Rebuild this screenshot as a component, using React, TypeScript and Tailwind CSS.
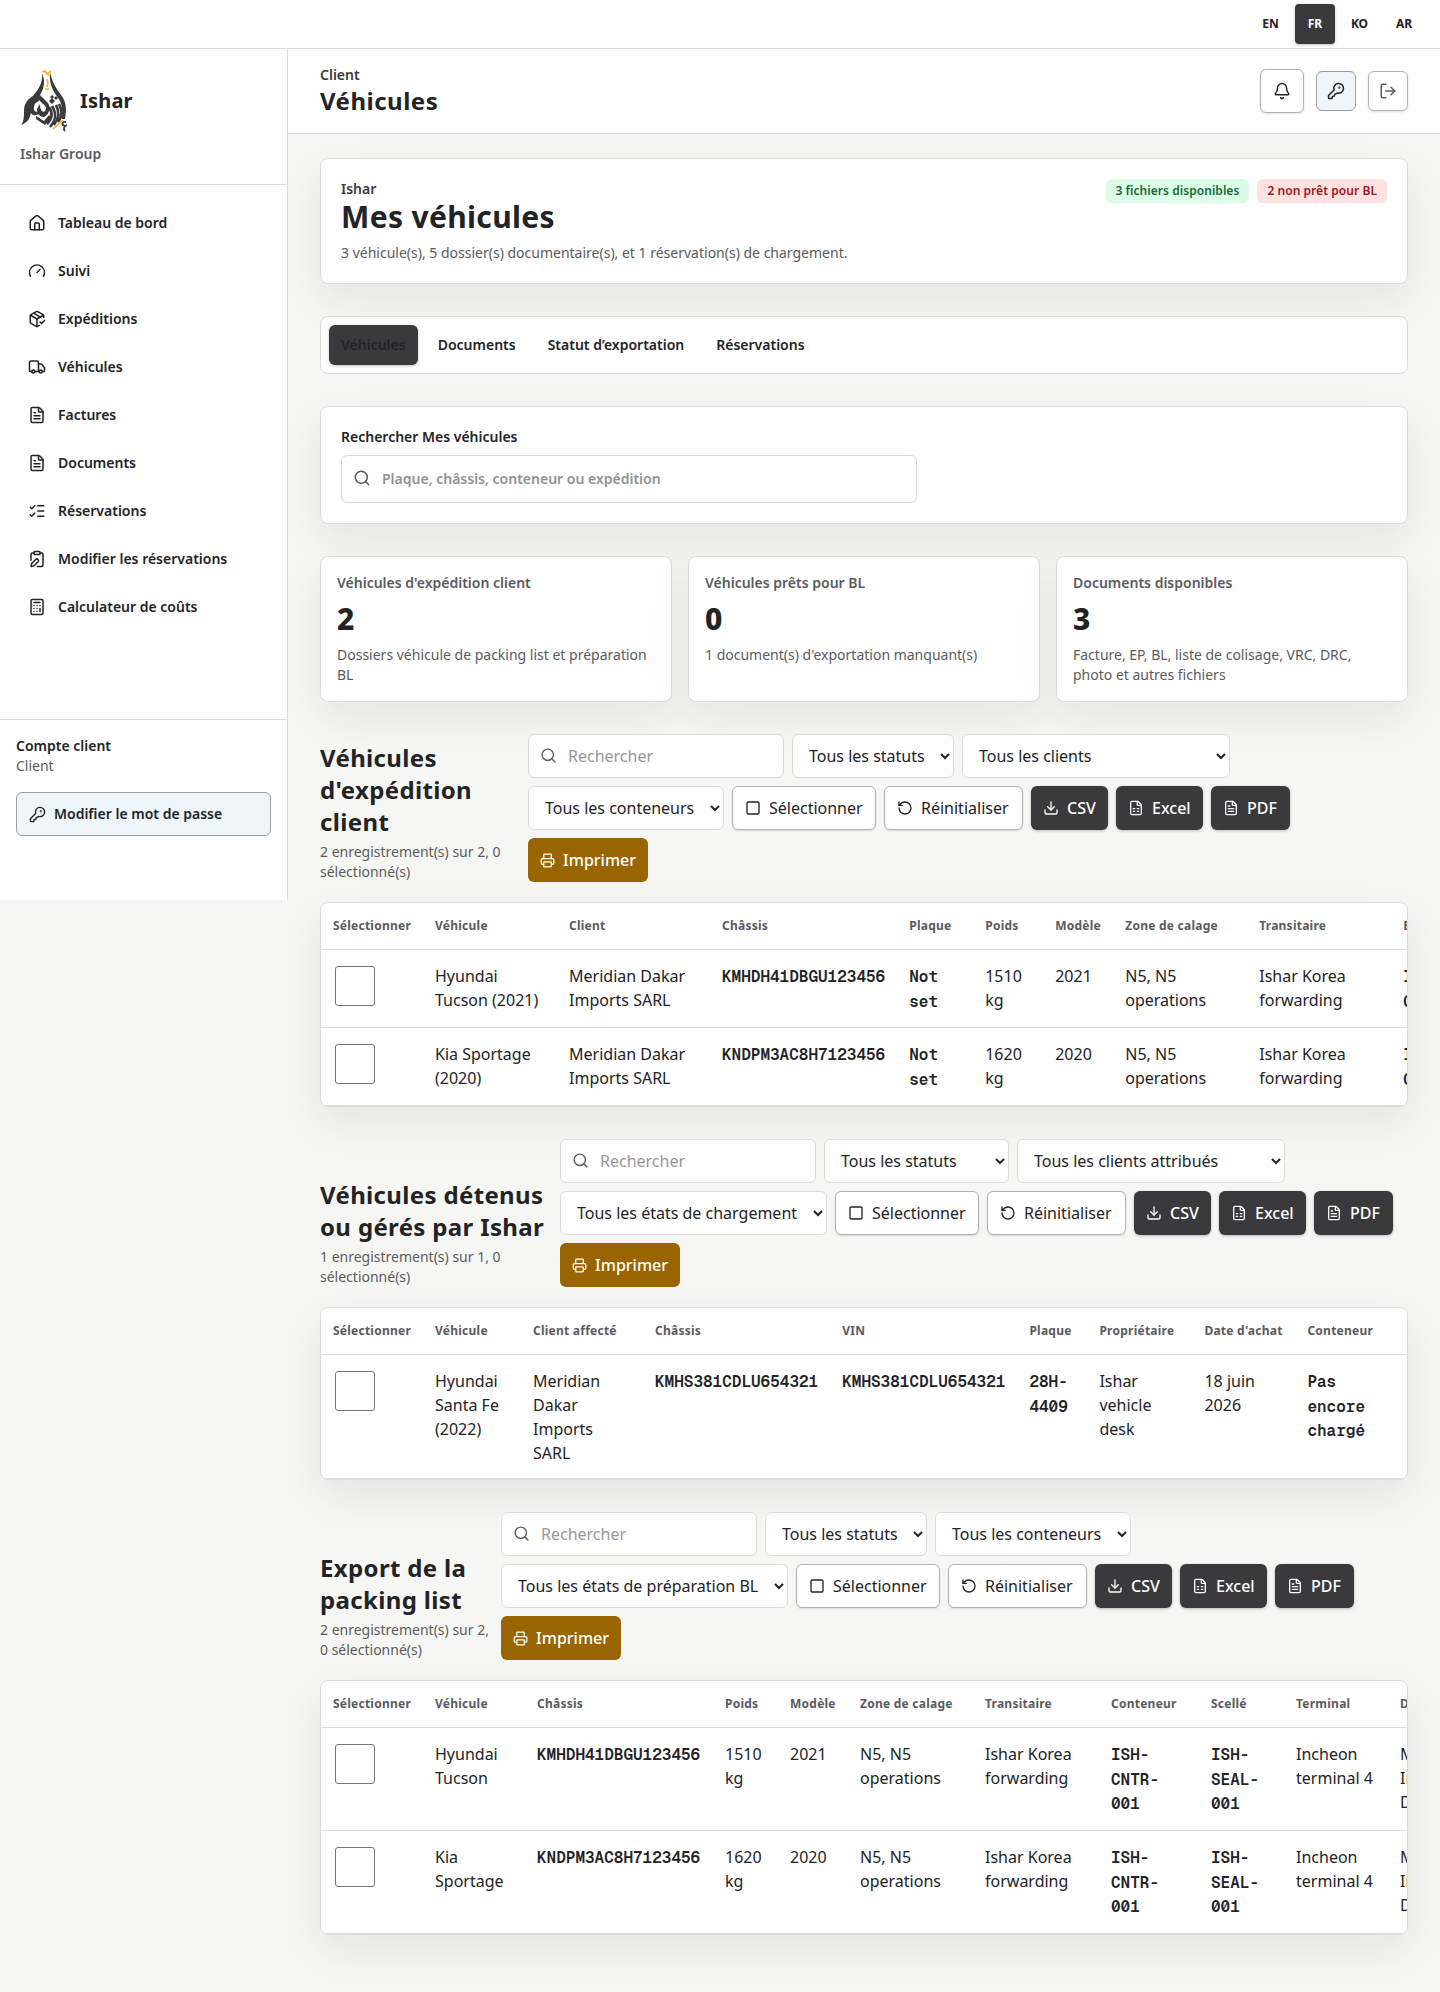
import {
  Bell,
  Calculator,
  ClipboardPen,
  Download,
  FileSpreadsheet,
  FileText,
  Gauge,
  House,
  KeyRound,
  ListChecks,
  LogOut,
  PackageCheck,
  Printer,
  RotateCcw,
  Search,
  Square,
  Truck,
  type LucideIcon,
} from "lucide-react";
import clsx from "clsx";

const navItems: { label: string; icon: LucideIcon }[] = [
  { label: "Tableau de bord", icon: House },
  { label: "Suivi", icon: Gauge },
  { label: "Expéditions", icon: PackageCheck },
  { label: "Véhicules", icon: Truck },
  { label: "Factures", icon: FileText },
  { label: "Documents", icon: FileText },
  { label: "Réservations", icon: ListChecks },
  { label: "Modifier les réservations", icon: ClipboardPen },
  { label: "Calculateur de coûts", icon: Calculator },
];

const stats = [
  { label: "Véhicules d'expédition client", value: "2", note: "Dossiers véhicule de packing list et préparation BL" },
  { label: "Véhicules prêts pour BL", value: "0", note: "1 document(s) d'exportation manquant(s)" },
  { label: "Documents disponibles", value: "3", note: "Facture, EP, BL, liste de colisage, VRC, DRC, photo et autres fichiers" },
];

type Column = { label: string; width: string; mono?: boolean };

const shipmentColumns: Column[] = [
  { label: "Véhicule", width: "w-[134px]" },
  { label: "Client", width: "w-[153px]" },
  { label: "Châssis", width: "w-[187px]", mono: true },
  { label: "Plaque", width: "w-[76px]", mono: true },
  { label: "Poids", width: "w-[70px]" },
  { label: "Modèle", width: "w-[70px]" },
  { label: "Zone de calage", width: "w-[134px]" },
  { label: "Transitaire", width: "w-[144px]" },
  { label: "Empotage", width: "w-[140px]", mono: true },
];

const shipmentRows = [
  ["Hyundai\nTucson (2021)", "Meridian Dakar\nImports SARL", "KMHDH41DBGU123456", "Not\nset", "1510\nkg", "2021", "N5, N5\noperations", "Ishar Korea\nforwarding", "ISH-\nCNTR"],
  ["Kia Sportage\n(2020)", "Meridian Dakar\nImports SARL", "KNDPM3AC8H7123456", "Not\nset", "1620\nkg", "2020", "N5, N5\noperations", "Ishar Korea\nforwarding", "ISH-\nCNTR"],
];

const ownedColumns: Column[] = [
  { label: "Véhicule", width: "w-[98px]" },
  { label: "Client affecté", width: "w-[122px]" },
  { label: "Châssis", width: "w-[187px]", mono: true },
  { label: "VIN", width: "w-[187px]", mono: true },
  { label: "Plaque", width: "w-[70px]", mono: true },
  { label: "Propriétaire", width: "w-[105px]" },
  { label: "Date d'achat", width: "w-[103px]" },
  { label: "Conteneur", width: "w-[114px]", mono: true },
];

const ownedRows = [
  ["Hyundai\nSanta Fe\n(2022)", "Meridian\nDakar\nImports\nSARL", "KMHS381CDLU654321", "KMHS381CDLU654321", "28H-\n4409", "Ishar\nvehicle\ndesk", "18 juin\n2026", "Pas\nencore\nchargé"],
];

const packingColumns: Column[] = [
  { label: "Véhicule", width: "w-[102px]" },
  { label: "Châssis", width: "w-[188px]", mono: true },
  { label: "Poids", width: "w-[65px]" },
  { label: "Modèle", width: "w-[70px]" },
  { label: "Zone de calage", width: "w-[125px]" },
  { label: "Transitaire", width: "w-[126px]" },
  { label: "Conteneur", width: "w-[100px]", mono: true },
  { label: "Scellé", width: "w-[85px]", mono: true },
  { label: "Terminal", width: "w-[104px]" },
  { label: "Destinataire", width: "w-[120px]" },
];

const packingRows = [
  ["Hyundai\nTucson", "KMHDH41DBGU123456", "1510\nkg", "2021", "N5, N5\noperations", "Ishar Korea\nforwarding", "ISH-\nCNTR-\n001", "ISH-\nSEAL-\n001", "Incheon\nterminal 4", "Meridian\nImports\nDakar"],
  ["Kia\nSportage", "KNDPM3AC8H7123456", "1620\nkg", "2020", "N5, N5\noperations", "Ishar Korea\nforwarding", "ISH-\nCNTR-\n001", "ISH-\nSEAL-\n001", "Incheon\nterminal 4", "Meridian\nImports\nDakar"],
];

const cardClass = "rounded-lg border border-[#dcdcd9] bg-[#fefefe]";
const shadowClass = "shadow-[0_16px_40px_rgba(35,35,38,0.08)]";
const darkButton = "flex h-11 items-center gap-2 rounded-md bg-[#3a3a3c] px-3 font-medium text-white shadow-[0_1px_3px_rgba(0,0,0,0.25)]";
const lightButton = "flex h-11 items-center gap-2 rounded-md border border-[#b3b3b5] bg-white px-3 shadow-[0_1px_2px_rgba(0,0,0,0.12)]";

function Logo() {
  return (
    <svg width="48" height="64" viewBox="0 0 48 64" fill="none">
      <g fill="#3a3a3c">
        <path d="M22 4 C23 13 19 20 13 27 C6 31 4 36 4 43 C4 50 3 54 1 56 C7 54 10 50 11 43 C11 37 16 32 20 26 C25 18 25 11 22 4Z" />
        <path d="M30 3 C29 13 32 20 36 26 C42 33 43 40 42 50 L45 50 C47 40 46 32 41 26 C35 18 32 12 30 3Z" />
        <path d="M14 29 C9 35 8 43 13 46 C18 47 20 44 20 41 C17 44 13 43 14 38 C14 35 16 33 19 32 L18 28Z" />
        <path d="M18 24 L28 34 C31 39 29 46 24 48 C20 48 17 45 17 40 L20 35 C20 42 23 44 25 42 C27 40 26 37 23 35 L17 29Z" />
        <path d="M16 47 L24 52 L29 46 L31 49 L25 56 L16 50Z" />
        <path d="M29 32l3-3 3 3-3 3zM34 29l2-2 2 2-2 2zM30 28l2-2 2 2-2 2z" />
      </g>
      <g stroke="#3a3a3c" strokeWidth="2.6">
        <path d="M29 38 C33 44 32 50 27 55 M32 37 C37 45 36 51 30 58" />
        <path d="M36 36 C40 43 39 49 34 56 M39 35 C42 41 43 46 38 53" />
      </g>
      <path d="M46 53c-4-1-5 3-1 4l2-1c-3 1-4 4-2 6" stroke="#3a3a3c" strokeWidth="1.8" />
      <path d="M22 3 L25 2 L27 5 L31 2 M26 5 L29 6 M27 10 L28 14 L27 18 M25 20 h4 M33 60 L43 51" stroke="#f3b229" strokeWidth="1.6" />
    </svg>
  );
}

type SectionProps = {
  title: string;
  summary: string;
  titleWidth: string;
  filters: { label: string; width: string }[];
  columns: Column[];
  rows: string[][];
  rowHeight: string;
};

function VehicleSection({ title, summary, titleWidth, filters, columns, rows, rowHeight }: SectionProps) {
  return (
    <section className="mt-8">
      <div className="flex items-end gap-4">
        <div className={clsx("shrink-0", titleWidth)}>
          <h2 className="text-2xl leading-8 font-bold tracking-[0.35px] whitespace-pre">{title}</h2>
          <p className="mt-1 text-sm whitespace-pre text-[#5b5b5e]">{summary}</p>
        </div>
        <div className="flex flex-1 flex-wrap gap-2">
          <div className="flex h-11 w-64 items-center gap-[11px] rounded-md border border-[#dcdcd9] bg-[#fefefe] pl-[11px] text-[#98989b]">
            <Search size={17} className="-mt-0.5 text-[#5b5b5e]" />
            Rechercher
          </div>
          {filters.map((filter) => (
            <select
              key={filter.label}
              className={clsx("h-11 rounded-md border border-[#dcdcd9] bg-[#fefefe] px-3", filter.width)}
            >
              <option>{filter.label}</option>
            </select>
          ))}
          <button className={clsx(lightButton, "w-36")}>
            <Square size={16} />
            Sélectionner
          </button>
          <button className={clsx(lightButton, "w-[139px]")}>
            <RotateCcw size={16} />
            Réinitialiser
          </button>
          <button className={clsx(darkButton, "w-[77px]")}>
            <Download size={16} />
            CSV
          </button>
          <button className={clsx(darkButton, "w-[87px]")}>
            <FileSpreadsheet size={16} />
            Excel
          </button>
          <button className={clsx(darkButton, "w-[79px]")}>
            <FileText size={16} />
            PDF
          </button>
          <button className="flex h-11 w-[120px] items-center gap-2 rounded-md bg-[#9a6500] px-3 font-medium text-white">
            <Printer size={17} />
            Imprimer
          </button>
        </div>
      </div>

      <div className={clsx("mt-5 overflow-hidden", cardClass, shadowClass)}>
        <table className="w-max table-fixed border-separate border-spacing-0 text-left">
          <thead>
            <tr className="text-xs leading-[18px] font-bold tracking-[0.24px] text-[#5b5b5e]">
              <th className="w-[102px] border-b border-[#dcdcd9] px-3 py-3.5">Sélectionner</th>
              {columns.map((column) => (
                <th key={column.label} className={clsx("border-b border-[#dcdcd9] px-3 py-3.5 whitespace-nowrap", column.width)}>
                  {column.label}
                </th>
              ))}
            </tr>
          </thead>
          <tbody>
            {rows.map((row) => (
              <tr key={row[0]} className={clsx("align-top", rowHeight)}>
                <td className="border-b border-[#dcdcd9] px-3 pt-3.5">
                  <span className="mt-0.5 ml-0.5 block size-10 rounded-[3px] border border-[#767676] bg-white" />
                </td>
                {row.map((cell, index) => (
                  <td
                    key={index}
                    className={clsx(
                      "border-b border-[#dcdcd9] px-3 pb-3 whitespace-pre",
                      columns[index].mono
                        ? "pt-[15px] font-['Geist_Mono','JetBrains_Mono','Noto_Sans_Mono','Liberation_Mono',monospace] leading-[24.67px] font-semibold"
                        : "pt-3.5"
                    )}
                  >
                    {cell}
                  </td>
                ))}
              </tr>
            ))}
          </tbody>
        </table>
      </div>
    </section>
  );
}

export default function App() {
  return (
    <div className="h-[1992px] overflow-hidden bg-[#f6f6f4] font-['Noto_Sans',sans-serif] text-base text-[#232326]">
      {/* Language bar */}
      <div className="flex h-[49px] items-center justify-end gap-[4.5px] border-b border-[#dcdcd9] bg-[#fefefe] pr-4 text-xs font-bold">
        {["EN", "FR", "KO", "AR"].map((lang) => (
          <button
            key={lang}
            className={clsx(
              "h-10 min-w-10 rounded",
              lang === "FR" && "bg-[#3a3a3c] text-white shadow-[0_1px_3px_rgba(0,0,0,0.25)]"
            )}
          >
            {lang}
          </button>
        ))}
      </div>

      <div className="flex items-start">
        {/* Sidebar */}
        <aside className="flex h-[851px] w-72 shrink-0 flex-col border-r border-[#dcdcd9] bg-[#fefefe]">
          <div className="h-[136px] border-b border-[#dcdcd9] px-5 pt-5">
            <div className="flex items-center gap-3">
              <Logo />
              <span className="text-xl font-bold tracking-[0.2px]">Ishar</span>
            </div>
            <p className="mt-[11px] text-sm font-semibold text-[#5b5b5e]">Ishar Group</p>
          </div>
          <nav className="flex flex-1 flex-col gap-1 p-4">
            {navItems.map((item) => (
              <a key={item.label} className="flex h-11 items-center gap-3 px-3 text-sm font-semibold">
                <item.icon size={18} />
                {item.label}
              </a>
            ))}
          </nav>
          <div className="h-[181px] border-t border-[#dcdcd9] p-4 text-sm">
            <p className="font-semibold">Compte client</p>
            <p className="text-[#5b5b5e]">Client</p>
            <button className="mt-4 flex h-11 w-full items-center gap-2 rounded-md border border-[#9b9fa5] bg-[#eef5fb] px-3 font-semibold">
              <KeyRound size={17} />
              Modifier le mot de passe
            </button>
          </div>
        </aside>

        <div className="min-w-0 flex-1">
          <header className="flex h-[85px] items-center justify-between border-b border-[#dcdcd9] bg-[#fefefe] px-8">
            <div>
              <p className="text-sm font-semibold text-[#3a3a3c]">Client</p>
              <h1 className="text-2xl font-bold tracking-[0.5px]">Véhicules</h1>
            </div>
            <div className="flex items-center gap-3">
              <button className="flex size-11 items-center justify-center rounded-md border border-[#b3b3b5] bg-white shadow-[0_1px_2px_rgba(0,0,0,0.12)]">
                <Bell size={18} />
              </button>
              <button className="flex size-10 items-center justify-center rounded-md border border-[#9b9fa5] bg-[#eef5fb]">
                <KeyRound size={18} />
              </button>
              <button className="flex size-10 items-center justify-center rounded-md border border-[#b3b3b5] bg-white text-[#5b5b5e] shadow-[0_1px_2px_rgba(0,0,0,0.12)]">
                <LogOut size={18} />
              </button>
            </div>
          </header>

          <main className="px-8 pt-6">
            <section className={clsx("flex items-start justify-between p-5", cardClass, shadowClass)}>
              <div>
                <p className="text-sm font-semibold text-[#3a3a3c]">Ishar</p>
                <h2 className="text-3xl font-bold tracking-[0.35px]">Mes véhicules</h2>
                <p className="mt-2 text-sm text-[#5b5b5e]">3 véhicule(s), 5 dossier(s) documentaire(s), et 1 réservation(s) de chargement.</p>
              </div>
              <div className="flex gap-2 text-xs leading-6 font-semibold tracking-[0.05px]">
                <span className="rounded-md bg-[#dcfce7] px-2.5 text-[#166b3a]">3 fichiers disponibles</span>
                <span className="rounded-md bg-[#fee2e2] px-2.5 text-[#a3121f]">2 non prêt pour BL</span>
              </div>
            </section>

            {/* Tabs */}
            <div className={clsx("mt-8 flex gap-2 p-2 text-sm font-semibold", cardClass)}>
              {["Véhicules", "Documents", "Statut d’exportation", "Réservations"].map((tab, index) => (
                <button
                  key={tab}
                  className={clsx("h-10 rounded-md px-3", index === 0 && "bg-[#3a3a3c] shadow-[0_1px_3px_rgba(0,0,0,0.25)]")}
                >
                  {tab}
                </button>
              ))}
            </div>

            <section className={clsx("mt-8 p-5", cardClass, shadowClass)}>
              <p className="text-sm font-semibold">Rechercher Mes véhicules</p>
              <div className="mt-2 flex h-12 w-[576px] items-center gap-[11px] rounded-md border border-[#dcdcd9] pl-[11px] text-sm font-semibold text-[#929295]">
                <Search size={18} className="-mt-0.5 text-[#5b5b5e]" />
                Plaque, châssis, conteneur ou expédition
              </div>
            </section>

            <div className="mt-8 grid grid-cols-3 gap-4">
              {stats.map((stat) => (
                <div key={stat.label} className={clsx("h-[146px] p-4", cardClass, shadowClass)}>
                  <p className="text-sm font-semibold text-[#5b5b5e]">{stat.label}</p>
                  <p className="mt-2 text-3xl font-extrabold">{stat.value}</p>
                  <p className="mt-2 text-sm text-[#5b5b5e]">{stat.note}</p>
                </div>
              ))}
            </div>

            <VehicleSection
              title={"Véhicules\nd'expédition\nclient"}
              summary={"2 enregistrement(s) sur 2, 0\nsélectionné(s)"}
              titleWidth="w-48"
              filters={[
                { label: "Tous les statuts", width: "w-[162px]" },
                { label: "Tous les clients", width: "w-[268px]" },
                { label: "Tous les conteneurs", width: "w-[196px]" },
              ]}
              columns={shipmentColumns}
              rows={shipmentRows}
              rowHeight="h-[78px]"
            />
            <VehicleSection
              title={"Véhicules détenus\nou gérés par Ishar"}
              summary={"1 enregistrement(s) sur 1, 0\nsélectionné(s)"}
              titleWidth="w-56"
              filters={[
                { label: "Tous les statuts", width: "w-[185px]" },
                { label: "Tous les clients attribués", width: "w-[268px]" },
                { label: "Tous les états de chargement", width: "w-[267px]" },
              ]}
              columns={ownedColumns}
              rows={ownedRows}
              rowHeight="h-[124px]"
            />
            <VehicleSection
              title={"Export de la\npacking list"}
              summary={"2 enregistrement(s) sur 2,\n0 sélectionné(s)"}
              titleWidth="w-[165px]"
              filters={[
                { label: "Tous les statuts", width: "w-[162px]" },
                { label: "Tous les conteneurs", width: "w-[196px]" },
                { label: "Tous les états de préparation BL", width: "w-[287px]" },
              ]}
              columns={packingColumns}
              rows={packingRows}
              rowHeight="h-[103px]"
            />
          </main>
        </div>
      </div>
    </div>
  );
}
